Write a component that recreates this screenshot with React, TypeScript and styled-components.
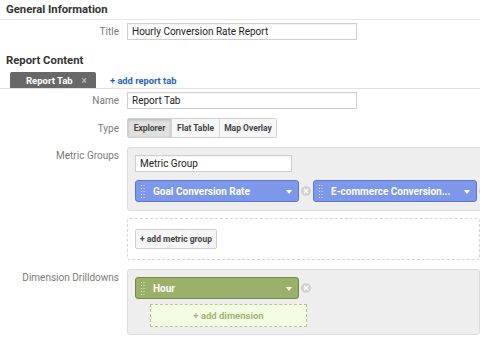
import React from "react";
import styled, { createGlobalStyle } from "styled-components";

const Global = createGlobalStyle`
  html, body { margin: 0; padding: 0; background: #fff; overflow: hidden; }
  body { font-family: Roboto, "Liberation Sans", Arial, sans-serif; color: #333; }
  * { box-sizing: border-box; }
`;

const Page = styled.div`
  width: 480px;
  height: 343px;
  overflow: hidden;
  display: flex;
  flex-direction: column;
`;

const SectionTitle = styled.div<{ $line?: boolean }>`
  font-weight: 700;
  font-size: 11.3px;
  color: #333;
  padding: 3px 6px 0;
  height: ${(p) => (p.$line ? "20px" : "auto")};
  border-bottom: ${(p) => (p.$line ? "1px solid #e6e6e6" : "none")};
`;

const Row = styled.div<{ $top?: number; $align?: string }>`
  display: flex;
  align-items: ${(p) => p.$align || "center"};
  gap: 8px;
  margin-top: ${(p) => p.$top ?? 0}px;
`;

const Label = styled.div<{ $pt?: number }>`
  width: 119px;
  flex: none;
  text-align: right;
  font-size: 10px;
  color: #7a7a7a;
  padding-top: ${(p) => p.$pt ?? 0}px;
`;

const TextInput = styled.div<{ $w?: number }>`
  width: ${(p) => p.$w ?? 230}px;
  height: 17px;
  border: 1px solid #cfcfcf;
  background: #fff;
  font-size: 10px;
  color: #222;
  display: flex;
  align-items: center;
  padding-left: 4px;
  box-shadow: inset 0 1px 1px rgba(0,0,0,0.05);
`;

const TabBar = styled.div`
  display: flex;
  align-items: flex-end;
  gap: 14px;
  padding-left: 10px;
  margin-top: 5px;
  height: 17px;
  border-bottom: 1px solid #e2e2e2;
`;

const Tab = styled.div`
  width: 86px;
  height: 16px;
  background: #686868;
  border-radius: 2px 2px 0 0;
  color: #fff;
  font-weight: 700;
  font-size: 9.5px;
  display: flex;
  align-items: center;
  padding-left: 16px;
  gap: 9px;
`;

const TabClose = styled.span`
  color: #c8c8c8;
  font-weight: 400;
  font-size: 10px;
`;

const AddLink = styled.div`
  color: #1f63b8;
  font-weight: 700;
  font-size: 9.3px;
  align-self: center;
  margin-top: 1px;
`;

const Segmented = styled.div`
  display: flex;
  border: 1px solid #d0d0d0;
  border-radius: 2px;
  height: 20px;
  overflow: hidden;
`;

const Seg = styled.div<{ $active?: boolean; $w: number }>`
  width: ${(p) => p.$w}px;
  display: flex;
  align-items: center;
  justify-content: center;
  font-size: 8.5px;
  font-weight: 700;
  color: #444;
  background: ${(p) => (p.$active ? "#e0e0e0" : "#f7f7f7")};
  box-shadow: ${(p) => (p.$active ? "inset 0 1px 3px rgba(0,0,0,0.18)" : "none")};
  & + & { border-left: 1px solid #d4d4d4; }
`;

const GrayBox = styled.div<{ $h: number }>`
  width: 365px;
  height: ${(p) => p.$h}px;
  background: #eeeeee;
  border: 1px solid #dcdcdc;
  border-radius: 3px;
  padding: 7px 0 0 7px;
  display: flex;
  flex-direction: column;
  gap: 8px;
`;

const DashedBox = styled.div`
  width: 365px;
  height: 42px;
  border: 1px dashed #d6d6d6;
  border-radius: 3px;
  background: #fff;
  padding: 10px 0 0 7px;
`;

const PillRow = styled.div`
  display: flex;
  align-items: center;
  gap: 2px;
`;

const Pill = styled.div<{ $c: "blue" | "green" }>`
  width: 164px;
  height: 22px;
  flex: none;
  border-radius: 3px;
  background: ${(p) => (p.$c === "blue" ? "#7d98ea" : "#9bb06a")};
  border: 1px solid ${(p) => (p.$c === "blue" ? "#5b77d3" : "#738a45")};
  color: #fff;
  font-weight: 700;
  font-size: 10px;
  display: flex;
  align-items: center;
  padding-left: 5px;
  padding-right: 6px;
`;

const PillText = styled.span`
  flex: 1;
  white-space: nowrap;
  overflow: hidden;
  margin-left: 8px;
`;

const Caret = styled.span`
  width: 0;
  height: 0;
  border-left: 3.5px solid transparent;
  border-right: 3.5px solid transparent;
  border-top: 4px solid #fff;
  margin-top: 1px;
`;

const Remove = styled.span`
  width: 10px;
  height: 10px;
  border-radius: 50%;
  background: #d2d2d2;
  flex: none;
  display: flex;
  align-items: center;
  justify-content: center;
`;

const SmallButton = styled.div`
  width: 82px;
  height: 20px;
  border: 1px solid #cfcfcf;
  border-radius: 2px;
  background: #f5f5f5;
  font-size: 8.5px;
  font-weight: 700;
  color: #444;
  display: flex;
  align-items: center;
  justify-content: center;
`;

const AddDimension = styled.div`
  width: 157px;
  height: 23px;
  margin-left: 15px;
  margin-top: -3px;
  border: 1px dashed #b7c890;
  background: #f3fde4;
  color: #a2b678;
  font-weight: 700;
  font-size: 9.5px;
  display: flex;
  align-items: center;
  justify-content: center;
`;

const Grip = () => (
  <svg width="4" height="13" viewBox="0 0 4 13" style={{ flex: "none" }}>
    {[0, 1, 2, 3, 4].map((i) => (
      <g key={i} fill="rgba(255,255,255,0.7)">
        <rect x="0" y={i * 3} width="1" height="1" />
        <rect x="2.5" y={i * 3} width="1" height="1" />
      </g>
    ))}
  </svg>
);

const RemoveIcon = () => (
  <Remove>
    <svg width="6" height="6" viewBox="0 0 6 6">
      <path d="M1 1L5 5M5 1L1 5" stroke="#fff" strokeWidth="1.3" />
    </svg>
  </Remove>
);

export default function App() {
  return (
    <Page>
      <Global />
      <SectionTitle $line>General Information</SectionTitle>
      <Row $top={3}>
        <Label>Title</Label>
        <TextInput>Hourly Conversion Rate Report</TextInput>
      </Row>
      <SectionTitle style={{ marginTop: 11 }}>Report Content</SectionTitle>
      <TabBar>
        <Tab>
          Report Tab <TabClose>×</TabClose>
        </Tab>
        <AddLink>+ add report tab</AddLink>
      </TabBar>
      <Row $top={3}>
        <Label>Name</Label>
        <TextInput>Report Tab</TextInput>
      </Row>
      <Row $top={9}>
        <Label>Type</Label>
        <Segmented>
          <Seg $active $w={43}>Explorer</Seg>
          <Seg $w={48}>Flat Table</Seg>
          <Seg $w={57}>Map Overlay</Seg>
        </Segmented>
      </Row>
      <Row $top={9} $align="flex-start">
        <Label $pt={3}>Metric Groups</Label>
        <GrayBox $h={64}>
          <TextInput $w={157}>Metric Group</TextInput>
          <PillRow>
            <Pill $c="blue">
              <Grip />
              <PillText>Goal Conversion Rate</PillText>
              <Caret />
            </Pill>
            <RemoveIcon />
            <Pill $c="blue">
              <Grip />
              <PillText>E-commerce Conversion...</PillText>
              <Caret />
            </Pill>
            <RemoveIcon />
          </PillRow>
        </GrayBox>
      </Row>
      <Row $top={7} $align="flex-start">
        <Label />
        <DashedBox>
          <SmallButton>+ add metric group</SmallButton>
        </DashedBox>
      </Row>
      <Row $top={9} $align="flex-start">
        <Label $pt={3}>Dimension Drilldowns</Label>
        <GrayBox $h={66}>
          <PillRow>
            <Pill $c="green">
              <Grip />
              <PillText>Hour</PillText>
              <Caret />
            </Pill>
            <RemoveIcon />
          </PillRow>
          <AddDimension>+ add dimension</AddDimension>
        </GrayBox>
      </Row>
    </Page>
  );
}
